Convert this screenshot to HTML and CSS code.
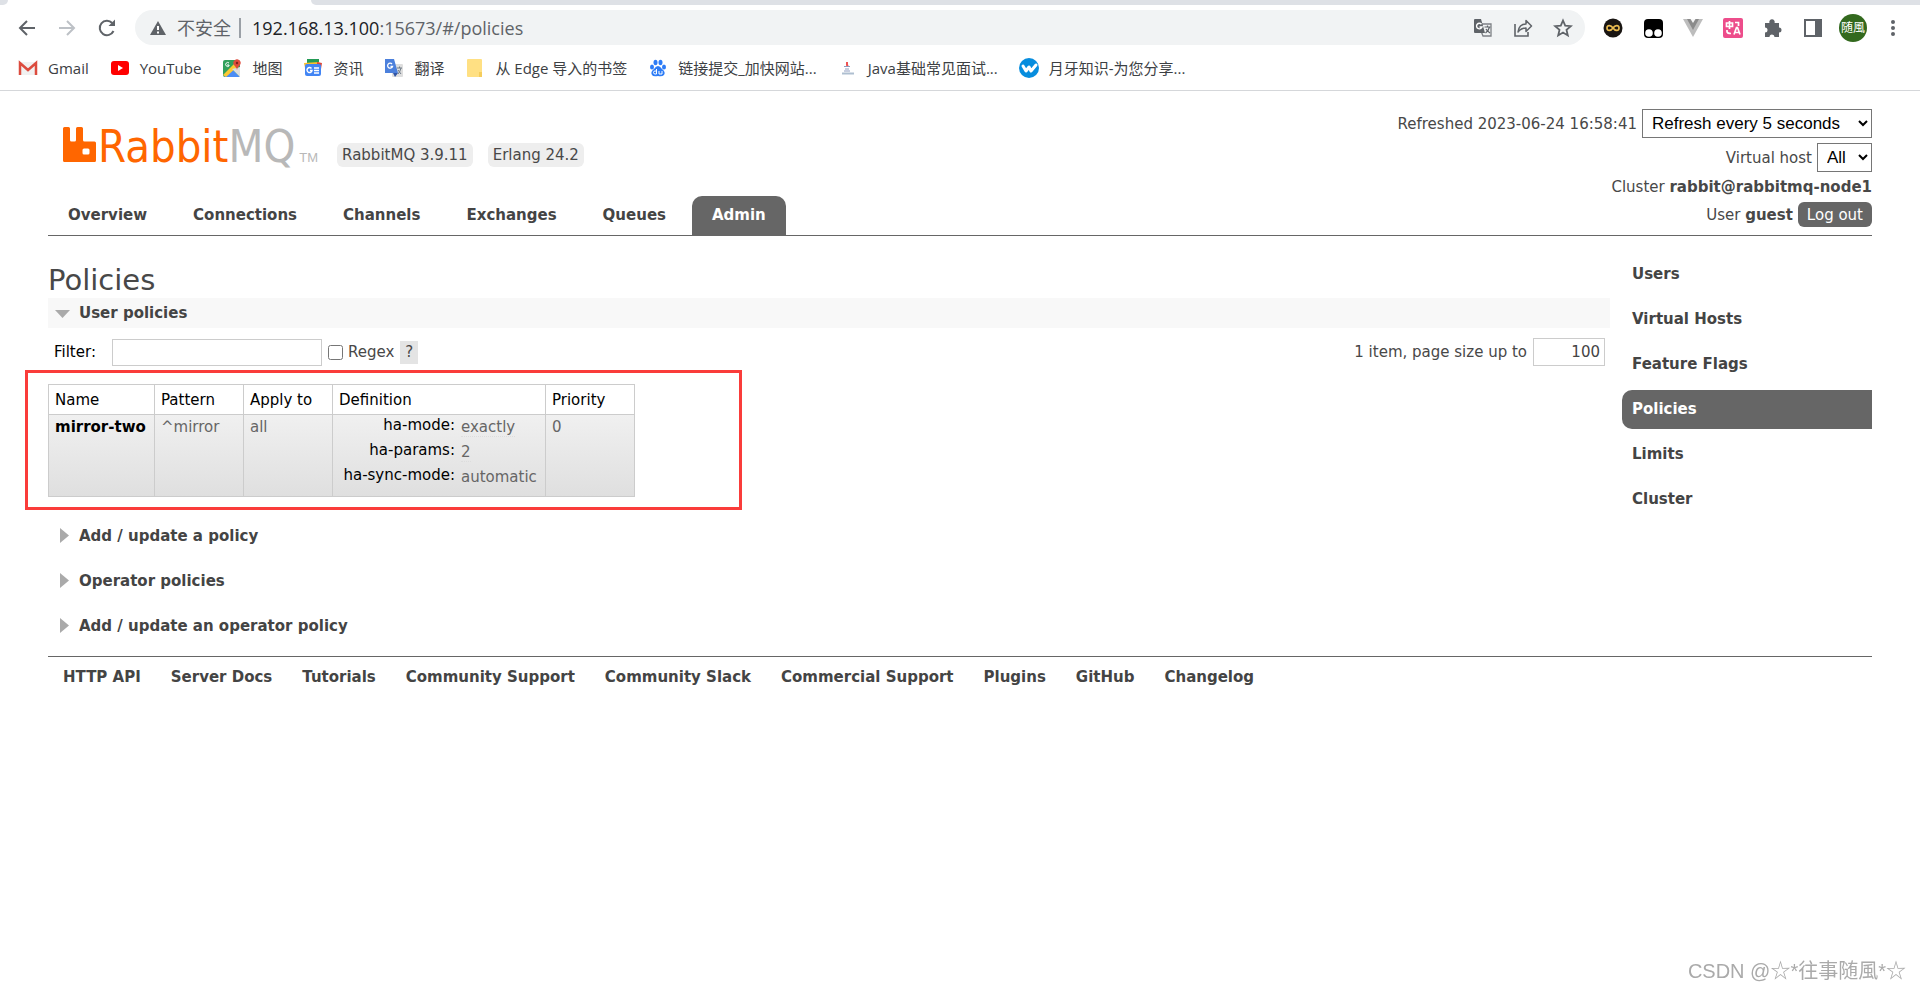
FILE: index.html
```html
<!DOCTYPE html>
<html lang="zh-CN">
<head>
<meta charset="utf-8">
<title>RabbitMQ Management</title>
<link rel="stylesheet" href="styles.css">
</head>
<body>
<div class="browser">
  <div class="tabstrip"><span class="tab-edge"></span><span class="active-tab"></span><span class="tab-rest"></span></div>
  <div class="toolbar">
    <div class="nav-buttons">
      <button class="icon-button" aria-label="Back"><svg width="20" height="20" viewBox="0 0 20 20"><path d="M18 10H3M10 3L3 10l7 7" fill="none" stroke="#5f6368" stroke-width="2"/></svg></button>
      <button class="icon-button" aria-label="Forward"><svg width="20" height="20" viewBox="0 0 20 20"><path d="M2 10h15M10 3l7 7-7 7" fill="none" stroke="#bdc1c6" stroke-width="2"/></svg></button>
      <button class="icon-button" aria-label="Reload"><svg width="20" height="20" viewBox="0 0 20 20"><path d="M16.500 13A7.200 7.200 0 1 1 15.200 5" fill="none" stroke="#5f6368" stroke-width="2"/><path d="M18 1.500V8h-6.500z" fill="#5f6368"/></svg></button>
    </div>
    <div class="omnibox">
      <svg width="16" height="16" viewBox="0 0 16 16"><path d="M8 1l8 14H0z" fill="#5f6368"/><path d="M8 6v4M8 11.500v2" stroke="#fff" stroke-width="2"/></svg>
      <span class="insecure">不安全</span><span class="divider"></span>
      <span class="url"><span class="host">192.168.13.100</span>:15673/#/policies</span>
      <div class="omni-actions">
        <button class="icon-button" aria-label="Translate"><svg width="20" height="20" viewBox="0 0 20 20"><path d="M9 6h9v12h-8l-2-5" fill="none" stroke="#7d8085" stroke-width="1.300"/><path d="M1 2q0-1 1-1h6l4 14H2q-1 0-1-1z" fill="#5f6368"/><path d="M8.500 6.200A2.800 2.800 0 1 0 9 9H6.500" fill="none" stroke="#fff" stroke-width="1.400"/><path d="M11.500 9h6M14.500 7.500V9M16.500 9q-1 4-4 6M13 11q1 2 4 4" fill="none" stroke="#5f6368" stroke-width="1.200"/></svg></button>
        <button class="icon-button" aria-label="Share"><svg width="20" height="20" viewBox="0 0 20 20"><path d="M2 6v12h13v-4" fill="none" stroke="#5f6368" stroke-width="1.600"/><path d="M5 14q1-8 8-8V2.500L18.500 8 13 13.500V10q-5 0-8 4z" fill="none" stroke="#5f6368" stroke-width="1.500" stroke-linejoin="round"/></svg></button>
        <button class="icon-button" aria-label="Bookmark"><svg width="20" height="20" viewBox="0 0 20 20"><path d="M10 2.500l2.200 5.200 5.600.5-4.300 3.700 1.300 5.500L10 14.500l-4.800 2.900 1.300-5.500L2.200 8.200l5.600-.5z" fill="none" stroke="#5f6368" stroke-width="1.800"/></svg></button>
      </div>
    </div>
    <div class="extensions">
      <button class="icon-button" aria-label="Infinity"><svg width="20" height="20" viewBox="0 0 20 20"><circle cx="10" cy="10" r="9.500" fill="#191512"/><path d="M10 10C8 7 4 6.500 4 10s4 3 6 0 6-3.500 6 0-4 3-6 0z" fill="none" stroke="#eabb50" stroke-width="1.700"/></svg></button>
      <button class="icon-button" aria-label="Tampermonkey"><svg width="20" height="20" viewBox="0 0 20 20"><rect x="1" y="1" width="19" height="19" rx="4"/><circle cx="6" cy="15" r="3.800" fill="#fff"/><circle cx="15" cy="15" r="3.800" fill="#fff"/></svg></button>
      <button class="icon-button" aria-label="Vue"><svg width="20" height="20" viewBox="0 0 20 20"><path d="M0 1h20L10 19z" fill="#bdbdbd"/><path d="M4 1h12l-6 11z" fill="#8b8b8b"/><path d="M7.500 1h5L10 5z" fill="#f7f7f7"/></svg></button>
      <button class="icon-button" aria-label="Immersive translate"><svg width="20" height="20" viewBox="0 0 20 20"><rect width="20" height="20" rx="2" fill="#ed4d8b"/><path d="M3.500 5h6v3.500h-6zM6.500 3v8M12 4.500h3.500V8M4 12v1.500q0 2 4 2M11 16.500l2.500-7h1l2.500 7M12 14.500h4" fill="none" stroke="#fff" stroke-width="1.700"/></svg></button>
      <button class="icon-button" aria-label="Extensions"><svg width="20" height="20" viewBox="0 0 20 20"><path d="M2 5h4.500a2.700 2.700 0 1 1 5 0H16v4.500a2.500 2.500 0 1 1 0 5V19h-4.500a2.500 2.500 0 0 0-5 0H2v-4.500a2.500 2.500 0 0 0 0-5z" fill="#5f6368"/></svg></button>
      <button class="icon-button" aria-label="Side panel"><svg width="20" height="20" viewBox="0 0 20 20"><path d="M1 1h18v18H1zM3 3v14h9V3z" fill="#5f6368" fill-rule="evenodd"/></svg></button>
      <button class="avatar" aria-label="Profile">随風</button>
      <button class="icon-button" aria-label="Menu"><svg width="20" height="20" viewBox="0 0 20 20"><g fill="#5f6368"><circle cx="10" cy="4" r="2"/><circle cx="10" cy="10" r="2"/><circle cx="10" cy="16" r="2"/></g></svg></button>
    </div>
  </div>
  <nav class="bookmarks" aria-label="Bookmarks">
    <a href="#"><svg width="20" height="20" viewBox="0 0 20 20"><path d="M1 4h18v13H1z" fill="#f1f1f1"/><path d="M2 17V5l8 7 8-7v12" fill="none" stroke="#dc4b3e" stroke-width="2.500"/></svg>Gmail</a>
    <a href="#"><svg width="20" height="20" viewBox="0 0 20 20"><rect x="1" y="3" width="18" height="14" rx="3" fill="#f00"/><path d="M8 7l5 3-5 3z" fill="#fff"/></svg>YouTube</a>
    <a href="#"><svg width="20" height="20" viewBox="0 0 20 20"><rect x="1" y="2" width="17" height="17" rx="2" fill="#31a05b"/><path d="M2 19l8-8 8 8z" fill="#4b8cf5"/><path d="M1 17L14 4l3 3L4 19z" fill="#fbc934"/><path d="M10 11l8 8V9z" fill="#ddd"/><path d="M15 12q0-2-3-5a3.600 3.600 0 1 1 6 0q-3 3-3 5z" fill="#df4b3c"/><circle cx="15" cy="5" r="1.200" fill="#7b241d"/><path d="M7 5a2 2 0 1 0 0 3V7H5" fill="none" stroke="#fff"/></svg>地图</a>
    <a href="#"><svg width="20" height="20" viewBox="0 0 20 20"><path d="M4 1h12v9H4z" fill="#249b55"/><path d="M1 5l15-1 2 6H2z" fill="#fbc02d"/><path d="M14 4l5 1-1 6h-4z" fill="#de4939"/><rect x="2" y="6" width="16" height="12" rx="2" fill="#4285f4"/><path d="M8.500 10.500a2.500 2.500 0 1 0 .5 2H7M11 10h5M11 12.500h5M11 15h5" fill="none" stroke="#fff" stroke-width="1.400"/></svg>资讯</a>
    <a href="#"><svg width="20" height="20" viewBox="0 0 20 20"><rect x="8" y="6" width="11" height="13" rx="1" fill="#dedede"/><path d="M1 1h9l4 14H1z" fill="#4c80dc"/><path d="M9 15h5l-3 4z" fill="#3155a4"/><path d="M8 6a2.500 2.500 0 1 0 .5 2.500H6.500" fill="none" stroke="#fff" stroke-width="1.300"/><path d="M13 10h5M15.500 8.500V10M17 10q-1 4-3 6M14 12l3 4" fill="none" stroke="#6f7a86"/></svg>翻译</a>
    <a href="#"><svg width="20" height="20" viewBox="0 0 20 20"><path d="M2 2q0-1 1-1h13q1 0 1 1v17H3q-1 0-1-1z" fill="#ffe083"/><path d="M14 19v-5h3v5z" fill="#f5cd5d"/></svg>从 Edge 导入的书签</a>
    <a href="#"><svg width="20" height="20" viewBox="0 0 20 20"><g fill="#2d7cf6"><ellipse cx="4" cy="9" rx="2" ry="2.600"/><ellipse cx="7.500" cy="4.500" rx="2" ry="2.800"/><ellipse cx="12.500" cy="4.500" rx="2" ry="2.800"/><ellipse cx="16" cy="9" rx="2" ry="2.600"/><path d="M10 8q2 0 4 3 4 3 2 6-2 2-6 1-5 1-6-1-2-3 2-6 2-3 4-3z"/></g><path d="M8.500 11v5H7a1.500 1.500 0 0 1 0-3h1.500M11 13v3h3v-3" fill="none" stroke="#fff"/></svg>链接提交_加快网站...</a>
    <a href="#"><svg width="20" height="20" viewBox="0 0 20 20"><path d="M9 4v3l1 1" fill="none" stroke="#ee5252" stroke-width="2"/><path d="M6 8.500h6M7 11h4M6 13h6" stroke="#8f9dc0"/><path d="M4 15.500h12" stroke="#aebfd0" stroke-width="2"/></svg>Java基础常见面试...</a>
    <a href="#"><svg width="20" height="20" viewBox="0 0 20 20"><circle cx="10" cy="10" r="10" fill="#078dde"/><path d="M4 8l3 5 3-4 2 4 5-6" fill="none" stroke="#fff" stroke-width="3" stroke-linejoin="round" stroke-linecap="round"/></svg>月牙知识-为您分享...</a>
  </nav>
</div>

<div class="page">
  <header class="header">
    <div class="brand-side">
      <div class="brand">
        <a class="logo" href="#" aria-label="RabbitMQ">
          <svg width="33" height="35" viewBox="0 0 33 35"><path d="M1.500 0h4Q7 0 7 1.500V13q0 1.500 1.500 1.500h3Q13 14.500 13 13V1.500Q13 0 14.500 0h4Q20 0 20 1.500V13q0 1.500 1.500 1.500h10Q33 14.500 33 16v17.500q0 1.500-1.500 1.500h-30Q0 35 0 33.500v-32Q0 0 1.500 0zM21 21.500q-1.500 0-1.500 1.500v3q0 1.500 1.500 1.500h4q1.500 0 1.500-1.500v-3q0-1.500-1.500-1.500z" fill="#f60" fill-rule="evenodd"/></svg><span class="wordmark">Rabbit<span class="mq">MQ</span></span><span class="tm">TM</span>
        </a>
        <span class="version">RabbitMQ 3.9.11</span>
        <span class="version">Erlang 24.2</span>
      </div>
      <nav class="tabs" aria-label="Main">
        <a href="#">Overview</a><a href="#">Connections</a><a href="#">Channels</a><a href="#">Exchanges</a><a href="#">Queues</a><a class="selected" href="#">Admin</a>
      </nav>
    </div>
    <div class="status">
      <div class="status-row"><label for="refresh">Refreshed 2023-06-24 16:58:41</label><select id="refresh" class="refresh"><option>Refresh every 5 seconds</option></select></div>
      <div class="status-row"><label for="vhost">Virtual host</label><select id="vhost" class="vhost"><option>All</option></select></div>
      <div class="status-row"><span>Cluster <b>rabbit@rabbitmq-node1</b></span></div>
      <div class="status-row"><span>User <b>guest</b></span><button class="logout">Log out</button></div>
    </div>
  </header>

  <div class="body">
    <main class="main">
      <h1>Policies</h1>
      <h2 class="section open"><button><svg width="16" height="16" viewBox="0 0 16 16"><path d="M0 5h15l-7.500 8z" fill="#aaa"/></svg>User policies</button></h2>
      <div class="filter">
        <label class="filter-label" for="filter">Filter:</label>
        <input id="filter" class="filter-input" type="text">
        <input id="regex" class="regex-box" type="checkbox"><label for="regex">Regex</label>
        <button class="help">?</button>
        <div class="paging"><label for="size">1 item, page size up to</label><input id="size" type="text" value="100"></div>
      </div>
      <div class="highlight">
        <table class="list">
          <thead><tr><th class="c-name">Name</th><th class="c-mid">Pattern</th><th class="c-mid">Apply to</th><th class="c-def">Definition</th><th class="c-mid">Priority</th></tr></thead>
          <tbody><tr><td><a href="#">mirror-two</a></td><td>^mirror</td><td>all</td>
            <td class="def"><dl><dt>ha-mode:</dt><dd><abbr title="exactly">exactly</abbr></dd><dt>ha-params:</dt><dd><abbr title="2">2</abbr></dd><dt>ha-sync-mode:</dt><dd>automatic</dd></dl></td>
            <td>0</td></tr></tbody>
        </table>
      </div>
      <h2 class="section"><button><svg width="16" height="16" viewBox="0 0 16 16"><path d="M5 0l9 7.500L5 15z" fill="#aaa"/></svg>Add / update a policy</button></h2>
      <h2 class="section"><button><svg width="16" height="16" viewBox="0 0 16 16"><path d="M5 0l9 7.500L5 15z" fill="#aaa"/></svg>Operator policies</button></h2>
      <h2 class="section"><button><svg width="16" height="16" viewBox="0 0 16 16"><path d="M5 0l9 7.500L5 15z" fill="#aaa"/></svg>Add / update an operator policy</button></h2>
    </main>
    <nav class="side" aria-label="Admin">
      <a href="#">Users</a><a href="#">Virtual Hosts</a><a href="#">Feature Flags</a><a class="selected" href="#">Policies</a><a href="#">Limits</a><a href="#">Cluster</a>
    </nav>
  </div>

  <footer class="footer">
    <a href="#">HTTP API</a><a href="#">Server Docs</a><a href="#">Tutorials</a><a href="#">Community Support</a><a href="#">Community Slack</a><a href="#">Commercial Support</a><a href="#">Plugins</a><a href="#">GitHub</a><a href="#">Changelog</a>
  </footer>
</div>
<div class="watermark">CSDN @☆*往事随風*☆</div>
</body>
</html>
```

FILE: styles.css
```css
* { box-sizing: border-box; }
body {
  margin: 0;
  background: #fff;
  color: #484848;
  font: 15px/20px Verdana, "DejaVu Sans", "Noto Sans CJK SC", sans-serif;
}
a { color: inherit; text-decoration: none; }
button { border: 0; padding: 0; background: none; font: inherit; color: inherit; }
svg { display: block; flex: none; }

/* Browser chrome */
.browser {
  border-bottom: 1px solid #d5d7da;
  font-family: "Open Sans", "Noto Sans CJK SC", sans-serif;
}
.tabstrip { display: flex; height: 5px; background: #fff; }
.tab-edge { width: 8px; background: #dee1e6; border-bottom-right-radius: 5px; }
.active-tab { width: 303px; }
.tab-rest { flex: 1; background: #dee1e6; border-bottom-left-radius: 5px; }
.toolbar { display: flex; align-items: center; height: 45px; padding: 0 17px; }
.nav-buttons { display: flex; gap: 20px; width: 118px; }
.omnibox {
  display: flex;
  flex: 1;
  align-items: center;
  height: 35px;
  padding: 0 12px 0 15px;
  border-radius: 18px;
  background: #f1f3f4;
  color: #5f6368;
  font-size: 18px;
}
.insecure { margin-left: 11px; font-size: 18px; }
.divider { width: 2px; height: 20px; margin: 0 11px 0 8px; background: #9aa0a6; }
.host { color: #202124; }
.omni-actions { display: flex; gap: 20px; margin-left: auto; }
.extensions { display: flex; align-items: center; gap: 20px; margin-left: 18px; }
.avatar {
  width: 28px;
  height: 28px;
  margin: 0 -4px;
  border-radius: 50%;
  background: #33691e;
  color: #fff;
  font-size: 12px;
  line-height: 28px;
}
.bookmarks { display: flex; align-items: center; gap: 21px; height: 40px; padding: 0 18px 4px; color: #3c4043; font-size: 15px; }
.bookmarks a { display: flex; align-items: center; gap: 10px; }

/* Management page */
.page { padding: 18px 48px 0; }
.header { display: flex; justify-content: space-between; border-bottom: 1px solid #666; }
.brand-side { display: flex; flex-direction: column; justify-content: space-between; }
.brand { display: flex; align-items: flex-end; padding: 17px 0 0 15px; }
.logo { display: flex; align-items: baseline; margin-right: 19px; }
.wordmark { margin-left: 2px; color: #f60; font: 45px/41px "Liberation Sans Narrow", "DejaVu Sans Condensed", sans-serif; }
.mq { color: #b8b8b8; }
.tm { margin-left: 4px; color: #b8b8b8; font: 13px/13px "Liberation Sans", sans-serif; }
.version { margin-right: 15px; padding: 2px 5px; border-radius: 6px; background: #eee; }
.tabs { display: flex; gap: 6px; }
.tabs a { padding: 9px 20px 10px; border-radius: 10px 10px 0 0; color: #444; font-weight: bold; }
.tabs .selected { background: #666; color: #fff; }
.status { display: flex; flex-direction: column; align-items: flex-end; gap: 5px; padding-bottom: 8px; }
.status-row { display: flex; align-items: center; gap: 5px; }
.status select { height: 29px; padding: 0 5px; border: 1px solid #767676; border-radius: 0; background: #fff; color: #000; font: 17px "Liberation Sans", sans-serif; }
.status .refresh { width: 230px; }
.status .vhost { width: 55px; }
.logout { height: 25px; padding: 0 9px; border-radius: 6px; background: #666; color: #fff; }

.body { display: flex; gap: 12px; }
.main { flex: 1; min-width: 0; padding-top: 26px; }
h1 { margin: 0; font-size: 29px; line-height: 36px; font-weight: normal; }
.section { margin: 0 0 15px; font-size: 15px; line-height: 20px; color: #444; }
.section button { display: flex; align-items: center; gap: 8px; width: 100%; padding: 5px 7px; font-weight: bold; text-align: left; }
.section.open { margin: 0 0 9px; background: #f8f8f8; }
.filter { display: flex; align-items: center; height: 30px; margin-bottom: 3px; }
.filter-label { margin: 0 16px 0 6px; color: #000; }
.filter-input { width: 210px; height: 27px; border: 1px solid #ccc; }
.regex-box { width: 15px; height: 15px; margin: 0 5px 0 6px; }
.help { width: 18px; height: 23px; margin-left: 6px; background: #e4e4e4; }
.paging { display: flex; align-items: center; gap: 6px; margin: 0 5px 0 auto; }
.paging input { width: 72px; height: 28px; padding: 0 4px; border: 1px solid #ccc; color: #444; font: inherit; text-align: right; }
.highlight { width: 717px; margin: 0 0 11px -23px; padding: 11px 20px 10px; border: 3px solid #fa3c3a; }
.list { border-collapse: collapse; }
.list th { height: 30px; padding: 0 6px; border: 1px solid #ccc; color: #000; font-weight: normal; text-align: left; }
.list td { height: 82px; padding: 2px 6px; border: 1px solid #ccc; color: #666; vertical-align: top; }
.list tbody tr { background: linear-gradient(#f0f0f0, #dfdfdf); }
.list td a { color: #000; font-weight: bold; }
.c-name { width: 106px; }
.c-mid { width: 89px; }
.c-def { width: 213px; }
.list .def { padding: 0 6px; }
dl { display: grid; grid-template-columns: 116px auto; column-gap: 6px; margin: 0; line-height: 25px; }
dt { color: #000; text-align: right; line-height: 21px; }
dd { margin: 0; }
abbr { text-decoration: none; border-bottom: 1px dotted #ddd; }

.side { display: flex; flex-direction: column; gap: 6px; width: 250px; padding-top: 19px; }
.side a { padding: 9px 10px 10px; border-radius: 10px 0 0 10px; color: #444; font-weight: bold; }
.side .selected { background: #666; color: #fff; }
.footer { display: flex; gap: 30px; padding: 10px 15px; border-top: 1px solid #666; color: #444; font-weight: bold; }
.watermark { position: fixed; right: 14px; bottom: 7px; color: #aaa; font: 20px/24px "Liberation Sans", "Noto Sans CJK SC", sans-serif; }
```
